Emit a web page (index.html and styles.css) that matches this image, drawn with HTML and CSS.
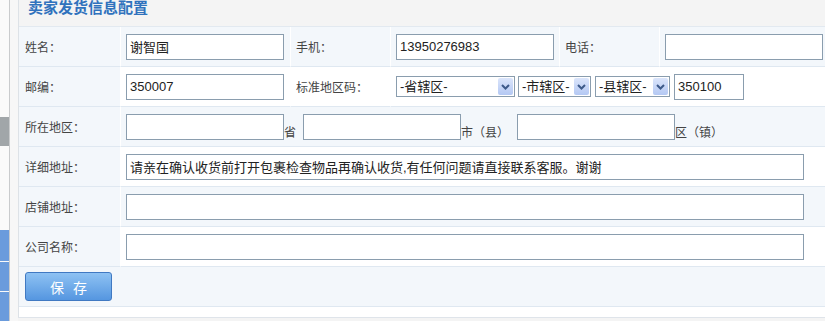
FILE: index.html
```html
<!DOCTYPE html>
<html lang="zh-CN">
<head>
  <meta charset="UTF-8" />
  <title>卖家发货信息配置</title>
  <link rel="stylesheet" href="styles.css">
</head>
<body>
  <div class="page">
    <aside class="side">
      <div class="side-grey"></div>
      <div class="side-blue first"></div>
      <div class="side-blue"></div>
      <div class="side-blue"></div>
    </aside>

    <main class="main">
      <div class="panel">
        <div class="panel-title">卖家发货信息配置</div>

        <table class="form">
          <colgroup>
            <col style="width:101px">
            <col style="width:170px">
            <col style="width:100px">
            <col style="width:169px">
            <col style="width:100px">
            <col>
          </colgroup>
          <tr class="alt">
            <td class="lbl">姓名：</td>
            <td><input class="txt" type="text" value="谢智国"></td>
            <td class="lbl">手机：</td>
            <td><input class="txt" type="text" value="13950276983"></td>
            <td class="lbl">电话：</td>
            <td><input class="txt" type="text" value=""></td>
          </tr>
          <tr>
            <td class="lbl">邮编：</td>
            <td><input class="txt" type="text" value="350007"></td>
            <td class="plain">标准地区码：</td>
            <td colspan="3">
              <div class="area">
                <span class="sel w1"><select><option>-省辖区-</option></select><span class="arrow"><svg width="9" height="6" viewBox="0 0 9 6"><path d="M1 1 L4.5 4.5 L8 1" fill="none" stroke="#3d5a8a" stroke-width="2"/></svg></span></span>
                <span class="sel w2"><select><option>-市辖区-</option></select><span class="arrow"><svg width="9" height="6" viewBox="0 0 9 6"><path d="M1 1 L4.5 4.5 L8 1" fill="none" stroke="#3d5a8a" stroke-width="2"/></svg></span></span>
                <span class="sel w3"><select><option>-县辖区-</option></select><span class="arrow"><svg width="9" height="6" viewBox="0 0 9 6"><path d="M1 1 L4.5 4.5 L8 1" fill="none" stroke="#3d5a8a" stroke-width="2"/></svg></span></span>
                <input class="txt short" type="text" value="350100">
              </div>
            </td>
          </tr>
          <tr class="alt">
            <td class="lbl">所在地区：</td>
            <td colspan="5">
              <div class="region">
                <input class="txt" type="text"><span class="unit u1">省</span>
                <input class="txt" type="text"><span class="unit u2">市（县）</span>
                <input class="txt" type="text"><span class="unit">区（镇）</span>
              </div>
            </td>
          </tr>
          <tr>
            <td class="lbl">详细地址：</td>
            <td colspan="5"><input class="txt wide" type="text" value="请亲在确认收货前打开包裹检查物品再确认收货,有任何问题请直接联系客服。谢谢"></td>
          </tr>
          <tr class="alt">
            <td class="lbl">店铺地址：</td>
            <td colspan="5"><input class="txt wide" type="text"></td>
          </tr>
          <tr>
            <td class="lbl">公司名称：</td>
            <td colspan="5"><input class="txt wide" type="text"></td>
          </tr>
          <tr class="alt">
            <td colspan="6" class="btn-cell"><button class="btn-save">保 存</button></td>
          </tr>
        </table>
      </div>
      <div class="panel-next"></div>
    </main>
  </div>
</body>
</html>
```

FILE: styles.css
```css
html, body {
  margin: 0;
  padding: 0;
  height: 321px;
  overflow: hidden;
  background: #f7f7f7;
  font-family: "Liberation Sans", "Noto Sans CJK SC", sans-serif;
  font-size: 12px;
  color: #444;
}

.page {
  display: flex;
  height: 321px;
}

/* left strip */
.side {
  width: 9px;
  flex: none;
  background: #fafafa;
  border-right: 1px solid #c9cbcd;
  display: flex;
  flex-direction: column;
}
.side-grey {
  margin-top: 117px;
  height: 29px;
  background: #a1a6a9;
}
.side-blue {
  height: 29px;
  margin-top: 1px;
  background: #6a9bdc;
}
.side-blue.first {
  margin-top: 84px;
  height: 32px;
}

.main {
  flex: none;
  width: 830px;
  padding-left: 8px;
}

.panel {
  background: #fff;
  border-left: 1px solid #dde2e7;
  border-bottom: 1px solid #dfe4ea;
  padding-bottom: 10px;
}

.panel-title {
  height: 26px;
  line-height: 16px;
  padding-left: 9px;
  background: #f4f4f4;
  border-bottom: 1px solid #e2e9f0;
  color: #3072bd;
  font-size: 15px;
  font-weight: bold;
}

.form {
  width: 806px;
  table-layout: fixed;
  border-collapse: separate;
  border-spacing: 0;
}
.form td {
  height: 39px;
  padding: 0 0 0 5px;
  border-bottom: 1px solid #dfe8f1;
  border-left: 1px solid #fff;
  vertical-align: middle;
  white-space: nowrap;
  overflow: visible;
}
.form td:first-child {
  border-left: none;
  padding-left: 6px;
}
.form tr.alt td {
  background: #f3f7fb;
}
.form td.lbl {
  background: #f3f7fb;
  color: #444;
}
.form td.plain {
  color: #444;
}

.txt {
  box-sizing: border-box;
  width: 158px;
  height: 26px;
  margin: 0;
  padding: 0 3px;
  border: 1px solid #8a9dae;
  background: #fff;
  font-family: "Liberation Sans", "Noto Sans CJK SC", sans-serif;
  font-size: 13px;
  color: #222;
  vertical-align: middle;
}
.txt.short {
  width: 70px;
}
.txt.wide {
  width: 678px;
}

.area {
  display: flex;
  align-items: center;
}
.sel {
  position: relative;
  display: inline-block;
  height: 21px;
}
.sel select {
  -webkit-appearance: none;
  appearance: none;
  box-sizing: border-box;
  width: 100%;
  height: 21px;
  margin: 0;
  padding: 0 0 0 3px;
  border: 1px solid #8a9dae;
  border-radius: 0;
  background: #fff;
  font-family: "Liberation Sans", "Noto Sans CJK SC", sans-serif;
  font-size: 13px;
  color: #222;
}
.sel.w1 { width: 119px; margin-right: 3px; }
.sel.w2 { width: 73px; margin-right: 4px; }
.sel.w3 { width: 75px; margin-right: 4px; }
.arrow {
  position: absolute;
  right: 2px;
  top: 2px;
  width: 15px;
  height: 17px;
  border-radius: 2px;
  background: linear-gradient(#dbe5fb, #b4c8f3);
  display: flex;
  align-items: center;
  justify-content: center;
}

.region {
  display: flex;
  align-items: flex-end;
}
.unit {
  line-height: 14px;
  margin-right: 6px;
  color: #444;
}
.unit.u1 { margin-right: 7px; }
.unit.u2 { margin-right: 8px; }

.btn-cell {
  padding-left: 6px;
}
.btn-save {
  width: 87px;
  height: 29px;
  border: 1px solid #4079c2;
  border-radius: 3px;
  background: linear-gradient(#8ec2f3, #5596e0);
  color: #fff;
  font-family: "Liberation Sans", "Noto Sans CJK SC", sans-serif;
  font-size: 14px;
  word-spacing: 5px;
  cursor: pointer;
}

.panel-next {
  height: 4px;
  background: #f4f4f4;
}
```
